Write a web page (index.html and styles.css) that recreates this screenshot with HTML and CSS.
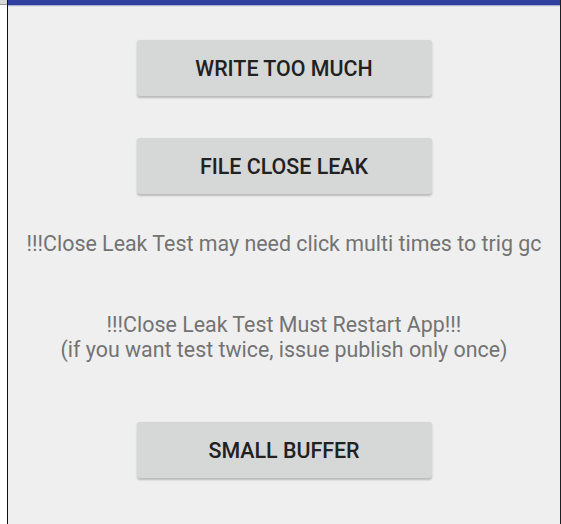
FILE: index.html
```html
<!DOCTYPE html>
<html>
<head>
<meta charset="utf-8">
<link rel="stylesheet" href="styles.css">
</head>
<body>
<div class="frame">
  <div class="side-strip"><div class="side-top"></div></div>
  <div class="app">
    <div class="status-bar"></div>
    <div class="content">
      <button class="btn btn-first">WRITE TOO MUCH</button>
      <button class="btn btn-second">FILE CLOSE LEAK</button>
      <p class="note note-one">!!!Close Leak Test may need click multi times to trig gc</p>
      <p class="note note-two">!!!Close Leak Test Must Restart App!!!<br>(if you want test twice, issue publish only once)</p>
      <button class="btn btn-third">SMALL BUFFER</button>
    </div>
  </div>
  <div class="right-edge"></div>
</div>
</body>
</html>
```
FILE: styles.css
```css
html, body {
  margin: 0;
  padding: 0;
  height: 100%;
  background: #efefef;
}
.frame {
  display: flex;
  height: 524px;
  width: 561px;
  overflow: hidden;
}
.side-strip {
  width: 7px;
  background: #ffffff;
  border-right: 1px solid #111111;
  flex: none;
}
.side-top {
  height: 4px;
  background: #d8d8d8;
  border-bottom: 1px solid #9a9a9a;
}
.app {
  flex: 1;
  display: flex;
  flex-direction: column;
  background: #efefef;
}
.status-bar {
  height: 5px;
  background: #303f9f;
  box-shadow: 0 1px 1px rgba(48, 63, 159, 0.35);
  flex: none;
}
.content {
  display: flex;
  flex-direction: column;
  align-items: center;
  font-family: Roboto, "Liberation Sans", sans-serif;
}
.btn {
  width: 295px;
  height: 56px;
  border: none;
  border-radius: 3px;
  background: #d6d7d7;
  box-shadow: 0 1.5px 2px rgba(0, 0, 0, 0.22);
  font-family: Roboto, "Liberation Sans", sans-serif;
  font-weight: 500;
  font-size: 21.4px;
  color: #212121;
  padding: 0;
}
.btn-first { margin-top: 35px; }
.btn-second { margin-top: 42px; }
.btn-third { margin-top: 60px; }
.note {
  margin: 0;
  font-size: 21.4px;
  line-height: 25px;
  color: #737373;
  text-align: center;
  white-space: nowrap;
}
.note-one { margin-top: 37px; }
.note-two { margin-top: 56px; }
.right-edge {
  width: 1px;
  background: #1a1f24;
  flex: none;
}
```
